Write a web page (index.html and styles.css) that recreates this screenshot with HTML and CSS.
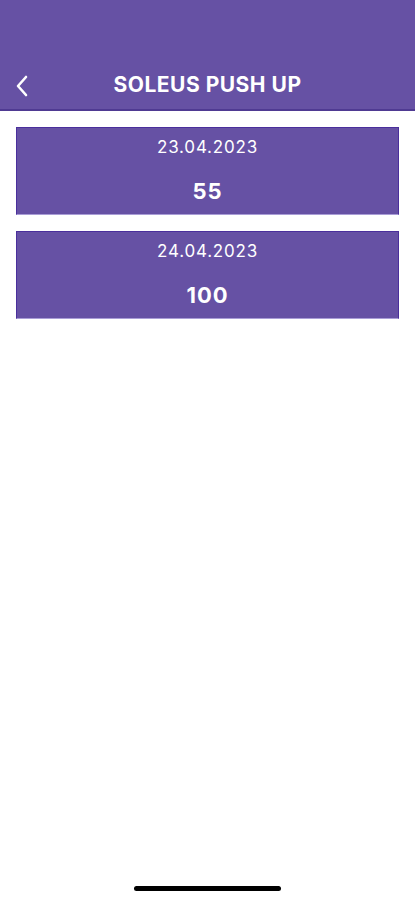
FILE: index.html
```html
<!DOCTYPE html>
<html lang="en">

<head>
    <meta charset="UTF-8">
    <meta name="viewport" content="width=device-width, initial-scale=1.0">
    <title>Soleus Push Up</title>
    <link rel="stylesheet" href="styles.css">
</head>

<body>
    <div class="screen">
        <header class="app-header">
            <button class="back-btn" aria-label="Back">
                <svg width="14" height="22" viewBox="0 0 14 22">
                    <path d="M11 2 L3 11 L11 20" fill="none" stroke="#fff" stroke-width="2.6" stroke-linecap="round" stroke-linejoin="round" />
                </svg>
            </button>
            <h1>SOLEUS PUSH UP</h1>
        </header>

        <main class="records">
            <div class="record">
                <div class="record-date">23.04.2023</div>
                <div class="record-count">55</div>
            </div>
            <div class="record">
                <div class="record-date">24.04.2023</div>
                <div class="record-count">100</div>
            </div>
        </main>

        <div class="home-indicator"></div>
    </div>
</body>

</html>
```

FILE: styles.css
```css
body {
    font-family: Inter, "Liberation Sans", sans-serif;
    margin: 0;
    background-color: white;
}

.screen {
    height: 900px;
    display: flex;
    flex-direction: column;
}

.app-header {
    background-color: #6651a4;
    height: 111px;
    box-sizing: border-box;
    padding-top: 61px;
    border-bottom: 2px solid #4f3a92;
    position: relative;
    display: flex;
    align-items: center;
    justify-content: center;
}

.app-header h1 {
    margin: 0;
    color: white;
    font-size: 21px;
    font-weight: bold;
    letter-spacing: 0.5px;
    height: 48px;
    line-height: 48px;
}

.back-btn {
    position: absolute;
    left: 15px;
    top: 75px;
    background: none;
    border: none;
    padding: 0;
    cursor: pointer;
}

.records {
    flex: 1;
    padding: 16px 16px 0 16px;
    display: flex;
    flex-direction: column;
    gap: 16px;
}

.record {
    background-color: #6651a4;
    border: 1px solid #4a2f9c;
    border-bottom-color: #a99dd6;
    height: 88px;
    box-sizing: border-box;
    text-align: center;
    color: white;
}

.record-date {
    font-size: 17px;
    letter-spacing: 0.8px;
    line-height: 20px;
    margin-top: 9px;
}

.record-count {
    font-size: 22px;
    font-weight: bold;
    letter-spacing: 1px;
    line-height: 24px;
    margin-top: 22px;
}

.home-indicator {
    width: 147px;
    height: 5px;
    border-radius: 3px;
    background-color: black;
    margin: 0 auto 9px auto;
}
```
